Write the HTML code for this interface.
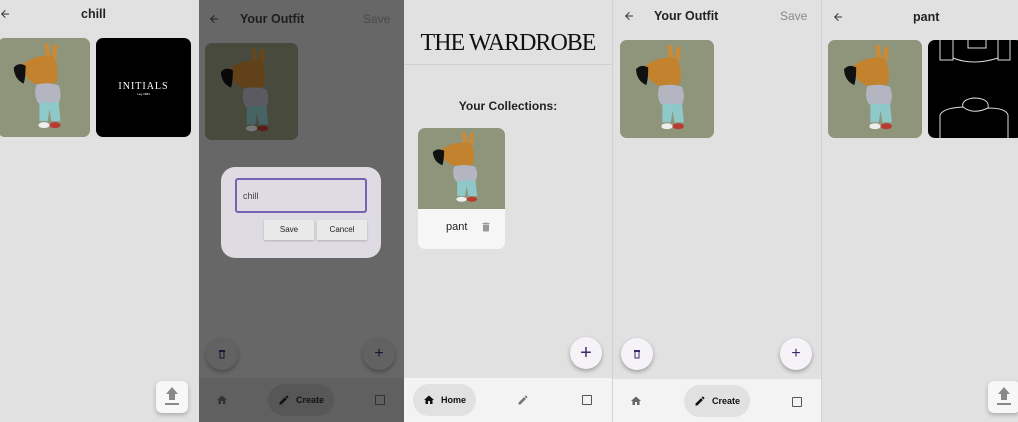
<!DOCTYPE html>
<html><head><meta charset="utf-8"><style>
*{margin:0;padding:0;box-sizing:border-box}
body{width:1018px;height:422px;position:relative;overflow:hidden;font-family:"Liberation Sans",sans-serif;background:#e1e1e1}
.a{position:absolute}
.p{position:absolute;top:0;height:422px;overflow:hidden}
.t{position:absolute;font-weight:bold;font-size:12.5px;color:#222}
.card{position:absolute;border-radius:7px;overflow:hidden;background:#8f957b}
.card svg{width:100%;height:100%;display:block}
.fab{position:absolute;width:32px;height:32px;border-radius:50%;background:#f5f3f7;box-shadow:0 2px 4px rgba(0,0,0,.3);display:flex;align-items:center;justify-content:center;color:#3a2a6a;font-size:20px}
.nav{position:absolute;left:0;right:0;top:378px;height:44px;background:#f3f3f3}
.pill{position:absolute;top:6px;height:32px;border-radius:16px;background:#e1e1e1;font-size:9px;font-weight:bold;display:flex;align-items:center;justify-content:center;gap:6px;color:#111}
.sq{position:absolute;width:10px;height:10px;border:1.5px solid #555;border-radius:1px}
.up{position:absolute;width:32px;height:32px;border-radius:6px;background:#f7f7f7;box-shadow:0 2px 4px rgba(0,0,0,.25)}
.ic{position:absolute}
</style></head><body>
<svg width="0" height="0" style="position:absolute"><defs>
<g id="bear">
<rect width="100" height="100" fill="#8f957b"/>
<path d="M52 20 L50 5 L55 6 L57 18 Z M58 20 L60 6 L65 8 L63 22Z" fill="#c98b3a"/>
<path d="M25 28 Q40 16 60 18 Q66 26 64 44 Q55 50 40 46 Q30 42 25 28Z" fill="#c2822e"/>
<path d="M17 30 Q22 24 30 28 Q30 40 28 46 Q18 42 17 30Z" fill="#111"/>
<path d="M42 47 Q55 44 66 48 Q70 58 66 66 L44 66 Q38 58 42 47Z" fill="#b3b5c0"/>
<path d="M45 65 L66 65 L68 84 L58 84 L56 72 L54 84 L45 84Z" fill="#8ec8c8"/>
<ellipse cx="50" cy="88" rx="6" ry="3" fill="#eee"/><ellipse cx="62" cy="88" rx="6" ry="3" fill="#b83a30"/>
</g>
<path id="home" d="M10 20v-6h4v6h5v-8h3L12 3 2 12h3v8z"/>
<path id="edit" d="M3 17.25V21h3.75L17.81 9.94l-3.75-3.75L3 17.25zM20.71 7.04a1 1 0 000-1.41l-2.34-2.34a1 1 0 00-1.41 0l-1.83 1.83 3.75 3.75 1.83-1.83z"/>
<path id="del" d="M6 19c0 1.1.9 2 2 2h8c1.1 0 2-.9 2-2V7H6v12zM19 4h-3.5l-1-1h-5l-1 1H5v2h14V4z"/>
<path id="trashO" d="M7 5h10v2H7zM8 7h8v13H8z" fill="none" stroke-width="2"/>
<path id="arrow" d="M20 11H7.83l5.59-5.59L12 4l-8 8 8 8 1.41-1.41L7.83 13H20v-2z"/>
</defs></svg>

<!-- panel 1 -->
<div class="p" style="left:0;width:198px;background:#e1e1e1">
<svg class="ic" style="left:-1px;top:8px" width="12" height="12" viewBox="0 0 24 24" fill="#333"><use href="#arrow"/></svg>
<div class="t" style="left:81px;top:7px">chill</div>
<div class="card" style="left:-2px;top:38px;width:92px;height:99px"><svg viewBox="0 0 100 100" preserveAspectRatio="none"><use href="#bear"/></svg></div>
<div class="card" style="left:96px;top:38px;width:95px;height:99px;background:#000;color:#fff;text-align:center"><div style="margin-top:43px;font-family:'Liberation Serif',serif;font-size:10px;letter-spacing:1px">INITIALS</div><div style="font-size:3px">Leg 1984</div></div>
<div class="up" style="left:156px;top:381px"><div class="a" style="left:10px;top:6px;width:0;height:0;border-left:6px solid transparent;border-right:6px solid transparent;border-bottom:7px solid #8a8a8a"></div><div class="a" style="left:13px;top:12px;width:6px;height:7px;background:#8a8a8a"></div><div class="a" style="left:9px;top:22px;width:14px;height:2px;background:#8a8a8a"></div></div>
</div>

<!-- panel 2 -->
<div class="p" style="left:199px;width:205px;background:#676767">
<svg class="ic" style="left:9px;top:13px" width="12" height="12" viewBox="0 0 24 24" fill="#222"><use href="#arrow"/></svg>
<div class="t" style="left:41px;top:12px;color:#1e1e1e">Your Outfit</div>
<div class="a" style="left:164px;top:12px;font-size:12px;color:#4a4a4a">Save</div>
<div class="card" style="left:6px;top:43px;width:93px;height:97px;filter:brightness(.5)"><svg viewBox="0 0 100 100" preserveAspectRatio="none"><use href="#bear"/></svg></div>
<div class="a" style="left:22px;top:167px;width:160px;height:91px;background:#dedbe3;border-radius:14px"></div>
<div class="a" style="left:36px;top:178px;width:132px;height:35px;border:2px solid #7562b0;border-radius:3px;font-size:9px;color:#444;padding:11px 0 0 6px">chill</div>
<div class="a" style="left:65px;top:220px;width:50px;height:20px;background:#e9e9e9;box-shadow:0 1px 2px rgba(0,0,0,.2);font-size:8px;text-align:center;line-height:20px;color:#222">Save</div>
<div class="a" style="left:118px;top:220px;width:50px;height:20px;background:#e9e9e9;box-shadow:0 1px 2px rgba(0,0,0,.2);font-size:8px;text-align:center;line-height:20px;color:#222">Cancel</div>
<div class="fab" style="left:7px;top:338px;background:#626262"><svg width="12" height="12" viewBox="0 0 24 24" stroke="#1e1433"><use href="#trashO"/></svg></div>
<div class="fab" style="left:164px;top:338px;background:#626262;color:#1e1433;font-size:16px">+</div>
<div class="nav" style="background:#606060"><svg class="ic" style="left:17px;top:16px" width="12" height="12" viewBox="0 0 24 24" fill="#333"><use href="#home"/></svg><div class="pill" style="left:69px;width:66px;background:#575757"><svg width="12" height="12" viewBox="0 0 24 24" fill="#111"><use href="#edit"/></svg>Create</div><div class="sq" style="left:176px;top:17px;border-color:#333"></div></div>
</div>

<!-- panel 3 -->
<div class="p" style="left:404px;width:208px;background:#e1e1e1">
<div class="a" style="left:0;top:64px;width:208px;height:1px;background:#cfcfcf"></div>
<div class="a" style="left:0;top:30px;width:208px;text-align:center;font-family:'Liberation Serif',serif;font-size:24px;color:#111;letter-spacing:-1px">THE WARDROBE</div>
<div class="t" style="left:0;width:208px;text-align:center;top:99px;font-size:12px">Your Collections:</div>
<div class="a" style="left:14px;top:128px;width:87px;height:121px;border-radius:7px;overflow:hidden;background:#f6f6f6">
<svg viewBox="0 0 100 100" preserveAspectRatio="none" style="width:87px;height:81px;display:block"><use href="#bear"/></svg>
<div class="a" style="left:28px;top:93px;font-size:11px;color:#222">pant</div>
<svg class="ic" style="left:62px;top:93px" width="12" height="12" viewBox="0 0 24 24" fill="#999"><use href="#del"/></svg></div>
<div class="fab" style="left:166px;top:337px">+</div>
<div class="nav"><div class="pill" style="left:9px;width:63px"><svg width="12" height="12" viewBox="0 0 24 24" fill="#111"><use href="#home"/></svg>Home</div><svg class="ic" style="left:113px;top:16px" width="12" height="12" viewBox="0 0 24 24" fill="#777"><use href="#edit"/></svg><div class="sq" style="left:178px;top:17px"></div></div>
</div>

<!-- panel 4 -->
<div class="p" style="left:612px;width:209px;background:#e1e1e1;border-left:1px solid #d2d2d2">
<svg class="ic" style="left:10px;top:10px" width="12" height="12" viewBox="0 0 24 24" fill="#333"><use href="#arrow"/></svg>
<div class="t" style="left:41px;top:9px">Your Outfit</div>
<div class="a" style="left:167px;top:9px;font-size:12px;color:#888">Save</div>
<div class="card" style="left:7px;top:40px;width:94px;height:98px"><svg viewBox="0 0 100 100" preserveAspectRatio="none"><use href="#bear"/></svg></div>
<div class="fab" style="left:8px;top:338px"><svg width="12" height="12" viewBox="0 0 24 24" stroke="#3a2a6a"><use href="#trashO"/></svg></div>
<div class="fab" style="left:167px;top:338px;font-size:16px">+</div>
<div class="nav" style="top:379px"><svg class="ic" style="left:17px;top:16px" width="12" height="12" viewBox="0 0 24 24" fill="#666"><use href="#home"/></svg><div class="pill" style="left:71px;width:66px"><svg width="12" height="12" viewBox="0 0 24 24" fill="#111"><use href="#edit"/></svg>Create</div><div class="sq" style="left:179px;top:18px"></div></div>
</div>

<!-- panel 5 -->
<div class="p" style="left:821px;width:197px;background:#e1e1e1;border-left:1px solid #d2d2d2">
<svg class="ic" style="left:10px;top:11px" width="12" height="12" viewBox="0 0 24 24" fill="#333"><use href="#arrow"/></svg>
<div class="t" style="left:91px;top:10px">pant</div>
<div class="card" style="left:6px;top:40px;width:94px;height:98px"><svg viewBox="0 0 100 100" preserveAspectRatio="none"><use href="#bear"/></svg></div>
<div class="card" style="left:106px;top:40px;width:95px;height:98px;background:#000"><svg viewBox="0 0 95 98"><path d="M12 0 V20 H25 V0 M40 0 V8 H58 V0 M70 0 V20 H82 V0 M25 18 Q45 26 70 18" stroke="#ddd" fill="none" stroke-width="1"/><path d="M12 98 V75 Q15 68 35 67 Q33 60 45 58 Q62 58 60 68 Q78 68 80 75 V98 M35 67 Q45 75 60 68" stroke="#ddd" fill="none" stroke-width="1"/></svg></div>
<div class="up" style="left:166px;top:381px"><div class="a" style="left:10px;top:6px;width:0;height:0;border-left:6px solid transparent;border-right:6px solid transparent;border-bottom:7px solid #8a8a8a"></div><div class="a" style="left:13px;top:12px;width:6px;height:7px;background:#8a8a8a"></div><div class="a" style="left:9px;top:22px;width:14px;height:2px;background:#8a8a8a"></div></div>
</div>
</body></html>
